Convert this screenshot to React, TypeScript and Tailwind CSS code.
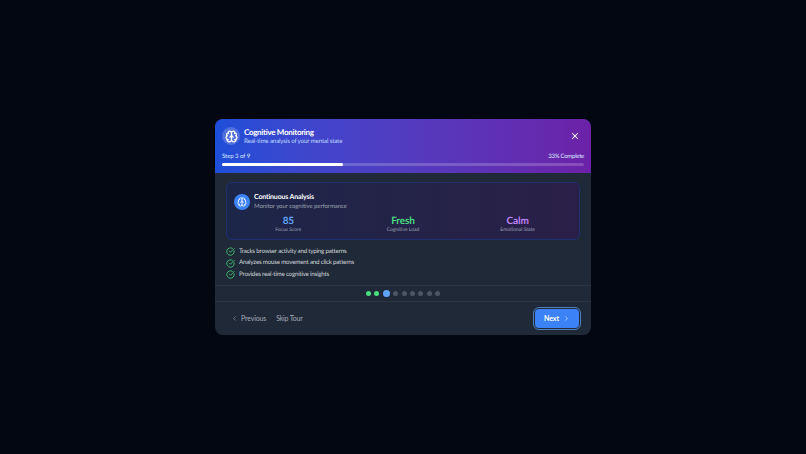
import React from "react";
import { Brain, ChevronLeft, ChevronRight, CircleCheckBig, X } from "lucide-react";

const stats = [
  { value: "85", label: "Focus Score", color: "text-[#60a5fa]" },
  { value: "Fresh", label: "Cognitive Load", color: "text-[#4ade80]" },
  { value: "Calm", label: "Emotional State", color: "text-[#c084fc]" },
];

const features = [
  "Tracks browser activity and typing patterns",
  "Analyzes mouse movement and click patterns",
  "Provides real-time cognitive insights",
];

const dots = [
  "w-[5px] h-[5px] bg-[#4ade80]",
  "w-[5px] h-[5px] bg-[#4ade80]",
  "w-[7px] h-[7px] bg-[#60a5fa]",
  "w-[5px] h-[5px] bg-[#4b5563]",
  "w-[5px] h-[5px] bg-[#4b5563]",
  "w-[5px] h-[5px] bg-[#4b5563]",
  "w-[5px] h-[5px] bg-[#4b5563]",
  "w-[5px] h-[5px] bg-[#4b5563]",
  "w-[5px] h-[5px] bg-[#4b5563]",
];

export default function App() {
  return (
    <div className="h-[454px] w-[806px] overflow-hidden bg-[#030712] flex items-center justify-center font-['Lato','Noto_Sans',sans-serif] [text-rendering:geometricPrecision]">
      <div className="w-[376px] h-[216px] rounded-lg bg-[#1f2937] overflow-hidden flex flex-col">
        {/* Header */}
        <div className="h-[54px] shrink-0 bg-gradient-to-r from-[#1d4ed8] to-[#6b21a8] px-[7px] pt-[8px]">
          <div className="flex items-center justify-between h-[18px]">
            <div className="flex items-center gap-[4px]">
              <div className="w-[18px] h-[18px] rounded-full bg-white/20 flex items-center justify-center">
                <Brain className="w-[13px] h-[13px] text-white" strokeWidth={2.4} />
              </div>
              <div className="flex flex-col pt-[1px]">
                <span className="text-[8px] leading-[10px] font-bold tracking-[-0.3px] text-white">Cognitive Monitoring</span>
                <span className="text-[6.25px] leading-[10px] tracking-[-0.18px] text-[#bfdbfe]">Real-time analysis of your mental state</span>
              </div>
            </div>
            <button className="mr-[4px] text-white">
              <X className="w-[10px] h-[10px]" strokeWidth={2.5} />
            </button>
          </div>
          <div className="mt-[8px] flex justify-between text-[6px] leading-[8px] text-[#dbeafe]">
            <span className="tracking-[-0.05px]">Step 3 of 9</span>
            <span className="tracking-[-0.25px]">33% Complete</span>
          </div>
          <div className="mt-[2px] h-[3px] rounded-full bg-white/20">
            <div className="h-full w-[33.3%] rounded-full bg-white" />
          </div>
        </div>

        {/* Body */}
        <div className="px-[11px] pt-[9px] flex-1">
          <div className="h-[58px] rounded-md border border-[#1e3070] bg-gradient-to-r from-[#1c2648] to-[#2a1f48] px-[7px] pt-[8px]">
            <div className="flex items-center gap-[4px]">
              <div className="w-[16px] h-[16px] rounded-full bg-[#3b82f6] flex items-center justify-center">
                <Brain className="w-[10px] h-[10px] text-white" />
              </div>
              <div className="flex flex-col pt-[1px]">
                <span className="text-[7px] leading-[10px] font-bold tracking-[-0.16px] text-white">Continuous Analysis</span>
                <span className="text-[6px] leading-[10px] tracking-[-0.06px] text-[#9ca3af]">Monitor your cognitive performance</span>
              </div>
            </div>
            <div className="mt-[2px] grid grid-cols-3 gap-[6px]">
              {stats.map((s) => (
                <div key={s.label} className="flex flex-col items-center pt-[2px]">
                  <span className={`text-[10px] leading-[10px] font-bold tracking-[-0.1px] ${s.color}`}>{s.value}</span>
                  <span className="text-[5px] leading-[8px] text-[#9ca3af]">{s.label}</span>
                </div>
              ))}
            </div>
          </div>

          <div className="mt-[6px] flex flex-col">
            {features.map((f) => (
              <div key={f} className="flex items-center gap-[4px] h-[11.5px]">
                <CircleCheckBig className="w-[9px] h-[9px] text-[#4ade80]" />
                <span className="text-[6.25px] leading-[10px] tracking-[-0.23px] text-[#d1d5db]">{f}</span>
              </div>
            ))}
          </div>
        </div>

        {/* Dots */}
        <div className="h-[16px] shrink-0 border-t border-[#2b3544] flex items-center justify-center gap-[3.4px]">
          {dots.map((d, i) => (
            <span key={i} className={`rounded-full ${d}`} />
          ))}
        </div>

        {/* Footer */}
        <div className="h-[34px] shrink-0 border-t border-[#2b3544] flex items-center justify-between pl-[16px] pr-[12px]">
          <div className="flex items-center gap-[10px]">
            <button className="flex items-center gap-[3px] text-[7px] tracking-[-0.15px] text-[#a3aab6]">
              <ChevronLeft className="w-[7px] h-[7px]" />
              Previous
            </button>
            <button className="text-[7px] tracking-[-0.2px] text-[#a3aab6]">Skip Tour</button>
          </div>
          <button className="w-[44px] h-[19px] rounded-[4px] bg-[#3b82f6] outline outline-1 outline-offset-1 outline-[#60a5fa]/70 flex items-center justify-center gap-[4px] text-[7px] font-bold text-white">
            Next
            <ChevronRight className="w-[7px] h-[7px]" />
          </button>
        </div>
      </div>
    </div>
  );
}
